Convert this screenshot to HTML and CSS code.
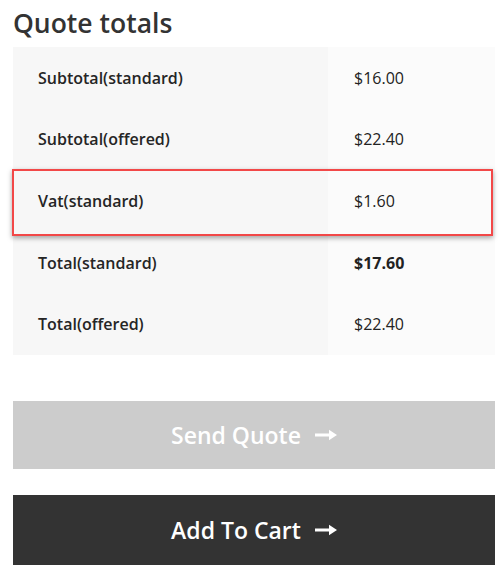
FILE: index.html
```html
<!DOCTYPE html>
<html>
<head>
<meta charset="utf-8">
<link rel="stylesheet" href="styles.css">
</head>
<body>
<div class="quote">
  <h2 class="quote-title">Quote totals</h2>
  <div class="totals">
    <div class="row"><div class="label">Subtotal(standard)</div><div class="value">$16.00</div></div>
    <div class="row"><div class="label">Subtotal(offered)</div><div class="value">$22.40</div></div>
    <div class="row highlighted"><div class="label">Vat(standard)</div><div class="value">$1.60</div></div>
    <div class="row"><div class="label">Total(standard)</div><div class="value strong">$17.60</div></div>
    <div class="row"><div class="label">Total(offered)</div><div class="value">$22.40</div></div>
  </div>
  <div class="actions">
    <button class="btn btn-disabled"><span>Send Quote</span><svg class="arrow" viewBox="0 0 22 12"><path d="M0 4.4h14V0.8l8 5.2-8 5.2V7.6H0z" fill="currentColor"/></svg></button>
    <button class="btn btn-dark"><span>Add To Cart</span><svg class="arrow" viewBox="0 0 22 12"><path d="M0 4.4h14V0.8l8 5.2-8 5.2V7.6H0z" fill="currentColor"/></svg></button>
  </div>
</div>
</body>
</html>
```
FILE: styles.css
```css
* { box-sizing: border-box; }
body {
  margin: 0;
  background: #fff;
  font-family: "Open Sans", "Noto Sans", sans-serif;
  color: #222;
}
.quote {
  width: 495px;
  padding: 6px 0 0 13px;
}
.quote-title {
  margin: 0 0 6px;
  font-size: 26.5px;
  font-weight: 600;
  color: #333;
  line-height: 35px;
}
.totals {
  display: flex;
  flex-direction: column;
}
.row {
  display: grid;
  grid-template-columns: 315px 167px;
  height: 61.6px;
  align-items: stretch;
}
.label, .value {
  display: flex;
  align-items: center;
  font-size: 16px;
}
.label {
  background: #f7f7f7;
  padding-left: 25px;
  font-weight: 600;
  color: #252525;
}
.value {
  background: #fbfbfb;
  padding-left: 26px;
  font-weight: 400;
}
.value.strong { font-weight: 700; }
.highlighted { position: relative; }
.highlighted::after {
  content: "";
  position: absolute;
  left: -1px;
  right: 2px;
  top: -1px;
  bottom: -4px;
  border: 2px solid #f24848;
  box-shadow: 0 2px 5px rgba(0,0,0,0.35);
  pointer-events: none;
}
.actions {
  display: flex;
  flex-direction: column;
  gap: 26px;
  margin-top: 46px;
}
.btn {
  display: flex;
  align-items: center;
  justify-content: center;
  gap: 14px;
  width: 482px;
  height: 68px;
  border: 0;
  font-family: inherit;
  font-size: 23px;
  font-weight: 600;
  color: #fff;
  padding: 0;
}
.btn-disabled { background: #cccccc; }
.btn-dark { background: #333333; height: 70px; }
.arrow { width: 22px; height: 12px; }
```
